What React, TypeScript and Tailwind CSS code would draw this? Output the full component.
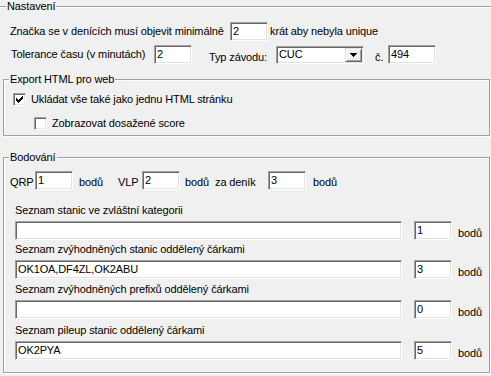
import React from 'react';

const sunken =
  'border border-t-[#a0a0a0] border-l-[#a0a0a0] border-r-white border-b-white shadow-[inset_1px_1px_0_#696969,inset_-1px_-1px_0_#e3e3e3] bg-white';

const Edit: React.FC<{ value?: string; className?: string }> = ({ value = '', className = '' }) => (
  <div className={`${sunken} h-[19px] shrink-0 pl-[2px] pt-[2px] leading-[13px] whitespace-nowrap overflow-hidden ${className}`}>
    {value}
  </div>
);

const Check: React.FC<{ checked?: boolean }> = ({ checked }) => (
  <div className={`${sunken} w-[13px] h-[13px] shrink-0 flex items-center justify-center`}>
    {checked && (
      <svg width="7" height="7" viewBox="0 0 7 7" shapeRendering="crispEdges" aria-hidden="true">
        <path d="M0 2h1v3H0zM1 3h1v3H1zM2 4h1v3H2zM3 3h1v3H3zM4 2h1v3H4zM5 1h1v3H5zM6 0h1v3H6z" fill="#000" />
      </svg>
    )}
  </div>
);

const Combo: React.FC<{ value: string }> = ({ value }) => (
  <div className={`${sunken} w-[88px] h-[18px] mt-[1px] p-[1px] flex shrink-0`}>
    <div className="flex-1 pl-[1px] leading-[13px]">{value}</div>
    <div className="w-[17px] h-[14px] flex items-center justify-center bg-[#f0f0f0] border border-t-[#e3e3e3] border-l-[#e3e3e3] border-r-[#696969] border-b-[#696969] shadow-[inset_1px_1px_0_#fff,inset_-1px_-1px_0_#a0a0a0]">
      <svg width="7" height="4" viewBox="0 0 7 4" shapeRendering="crispEdges" aria-hidden="true">
        <path d="M0 0h7v1h-1v1h-1v1h-1v1h-1v-1h-1v-1h-1v-1h-1z" fill="#000" />
      </svg>
    </div>
  </div>
);

const Group: React.FC<{ title: string; className?: string; children: React.ReactNode }> = ({ title, className = '', children }) => (
  <div className={`relative border border-[#a0a0a0] shadow-[inset_1px_1px_0_#fff,1px_1px_0_#fff] ${className}`}>
    <span className="absolute left-[5px] top-[-7px] bg-[#f0f0f0] px-[1px] leading-[13px] whitespace-nowrap">{title}</span>
    {children}
  </div>
);

const ListRow: React.FC<{ label: string; value: string; points: string; className?: string }> = ({ label, value, points, className = '' }) => (
  <div className={`pl-[11px] ${className}`}>
    <div className="h-[13px] whitespace-nowrap">{label}</div>
    <div className="flex items-start mt-[4px]">
      <Edit className="w-[387px]" value={value} />
      <Edit className="w-[38px] ml-[12px]" value={points} />
      <span className="ml-[6px] mt-[6px]">bodů</span>
    </div>
  </div>
);

export default function App() {
  return (
    <div className="w-[491px] h-[376px] overflow-hidden bg-[#f0f0f0] pt-[6px] text-[11px] leading-[13px] tracking-[-0.12px] text-black font-['Liberation_Sans',Arial,sans-serif]">
      {/* Nastavení */}
      <div className="relative border-t border-[#a0a0a0] shadow-[inset_0_1px_0_#fff]">
        <span className="absolute left-[6px] top-[-7px] bg-[#f0f0f0] px-[1px]">Nastavení</span>

        <div className="flex items-center h-[19px] mt-[15px] pl-[10px]">
          <span className="w-[220px] whitespace-nowrap">Značka se v denících musí objevit minimálně</span>
          <Edit className="w-[38px]" value="2" />
          <span className="ml-[2px] whitespace-nowrap">krát aby nebyla unique</span>
        </div>

        <div className="flex items-start mt-[4px] pl-[11px]">
          <span className="w-[143px] h-[19px] flex items-center whitespace-nowrap">Tolerance času (v minutách)</span>
          <Edit className="w-[38px]" value="2" />
          <span className="ml-[17px] w-[67px] mt-[6px] whitespace-nowrap">Typ závodu:</span>
          <Combo value="CUC" />
          <span className="ml-[11px] w-[13px] mt-[6px]">č.</span>
          <Edit className="w-[48px]" value="494" />
        </div>
      </div>

      {/* Export HTML */}
      <Group title="Export HTML pro web" className="mt-[15px] ml-[3px] w-[487px] h-[57px]">
        <div className="flex items-center mt-[13px] pl-[9px]">
          <Check checked />
          <span className="ml-[5px] whitespace-nowrap">Ukládat vše také jako jednu HTML stránku</span>
        </div>
        <div className="flex items-center mt-[11px] pl-[30px]">
          <Check />
          <span className="ml-[5px] whitespace-nowrap">Zobrazovat dosažené score</span>
        </div>
      </Group>

      {/* Bodování */}
      <Group title="Bodování" className="mt-[21px] ml-[3px] w-[487px] h-[216px]">
        <div className="flex items-start mt-[13px] pl-[6px]">
          <span className="w-[25px] mt-[5px]">QRP</span>
          <Edit className="w-[38px]" value="1" />
          <span className="ml-[6px] w-[39px] mt-[5px]">bodů</span>
          <span className="w-[24px] mt-[5px]">VLP</span>
          <Edit className="w-[38px]" value="2" />
          <span className="ml-[5px] w-[30px] mt-[5px]">bodů</span>
          <span className="w-[53px] mt-[5px] whitespace-nowrap">za deník</span>
          <Edit className="w-[38px]" value="3" />
          <span className="ml-[7px] mt-[5px]">bodů</span>
        </div>

        <ListRow className="mt-[14px]" label="Seznam stanic ve zvláštní kategorii" value="" points="1" />
        <ListRow className="mt-[3px]" label="Seznam zvýhodněných stanic oddělený čárkami" value="OK1OA,DF4ZL,OK2ABU" points="3" />
        <ListRow className="mt-[4px]" label="Seznam zvýhodněných prefixů oddělený čárkami" value="" points="0" />
        <ListRow className="mt-[5px]" label="Seznam pileup stanic oddělený čárkami" value="OK2PYA" points="5" />
      </Group>
    </div>
  );
}
